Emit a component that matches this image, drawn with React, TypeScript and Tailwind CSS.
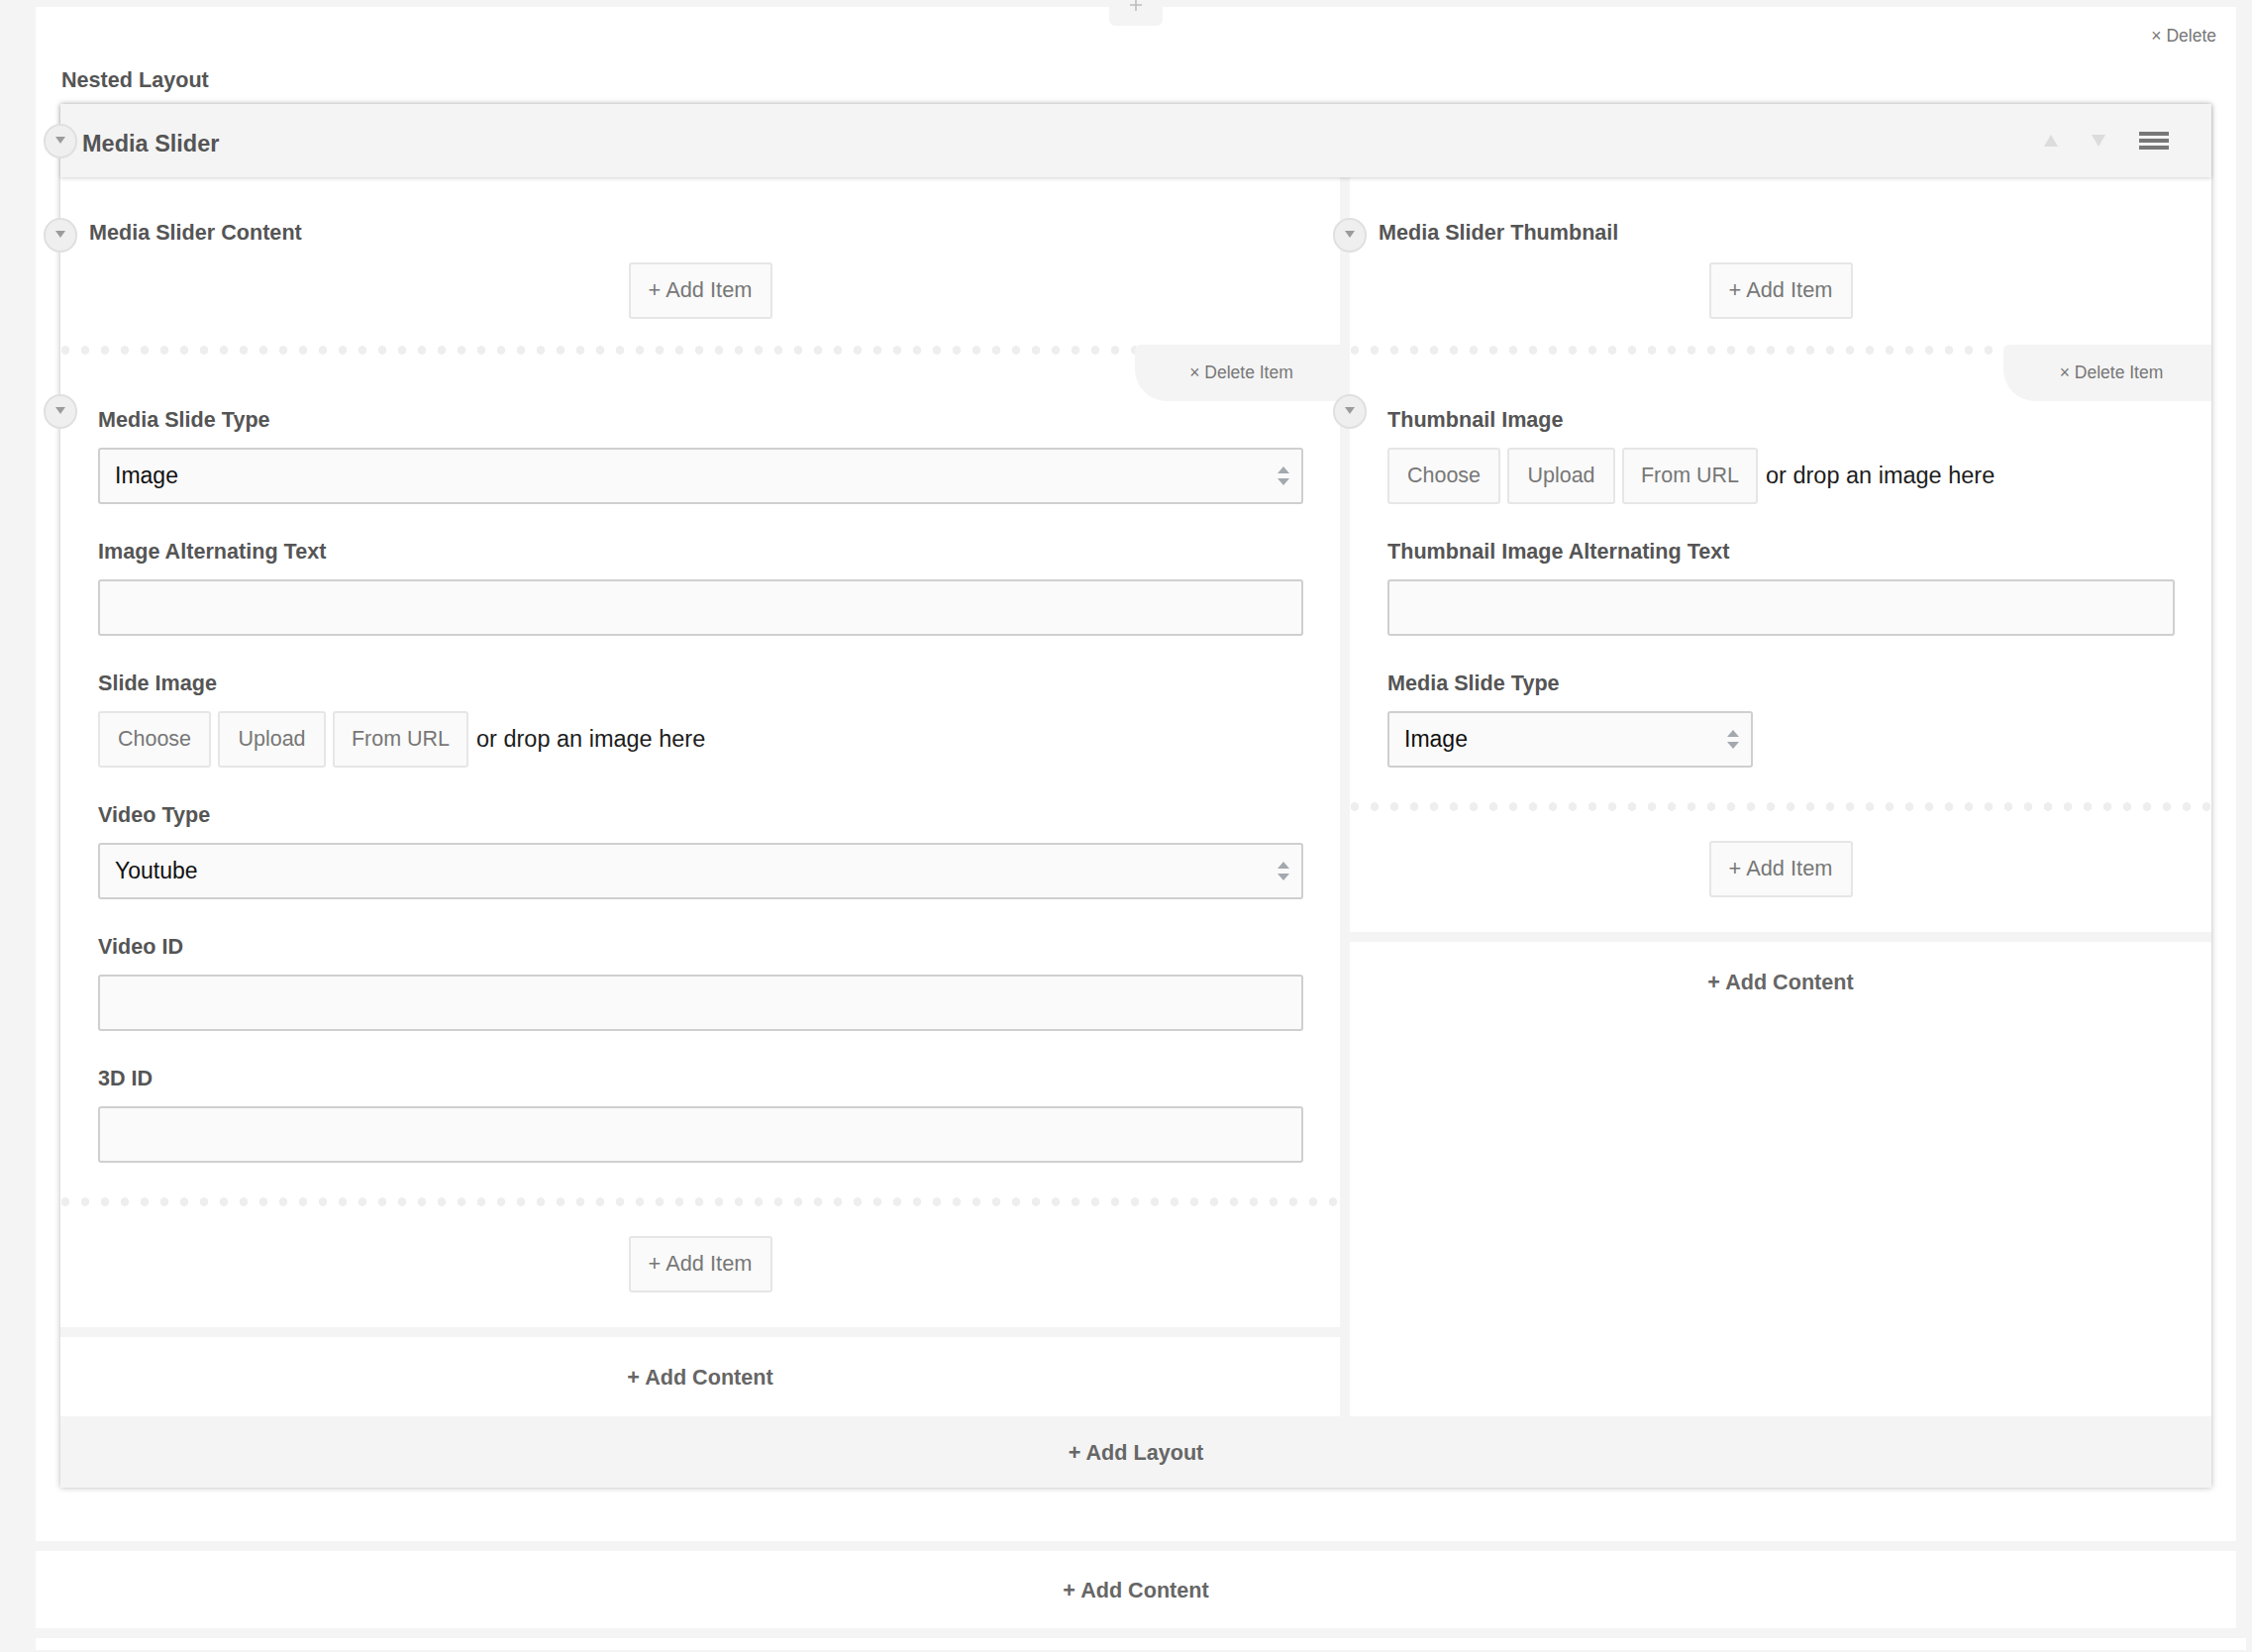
import React from "react";

const font = "font-['Liberation_Sans',Arial,Helvetica,sans-serif]";

function Toggle({ pos }: { pos: string }) {
  return (
    <span
      className={`absolute z-10 flex h-[35px] w-[34px] items-start justify-center rounded-full border-2 border-[#e0e0e0] bg-[#efefef] pt-[11px] ${pos}`}
    >
      <span className="h-0 w-0 border-x-[5px] border-t-[7px] border-x-transparent border-t-[#9b9b9b]" />
    </span>
  );
}

function Dots() {
  return (
    <div className="h-[9px] bg-[radial-gradient(circle,#eeeeee_4px,transparent_4.6px)] bg-[length:20px_9px] bg-[position:-5px_0] bg-repeat-x" />
  );
}

function Label({ children }: { children: React.ReactNode }) {
  return <div className="pt-px text-[21.6px] font-bold leading-6 text-[#555]">{children}</div>;
}

function SelectBox({ value, width }: { value: string; width: string }) {
  return (
    <div
      className={`flex h-[57px] items-center justify-between rounded-[3px] border-2 border-[#cfcfcf] bg-[#fafafa] pl-[15px] pr-[12px] ${width}`}
    >
      <span className="text-[23px] text-[#111]">{value}</span>
      <span className="flex flex-col gap-[5px]">
        <span className="h-0 w-0 border-x-[6.5px] border-b-[7px] border-x-transparent border-b-[#a4a8af]" />
        <span className="h-0 w-0 border-x-[6.5px] border-t-[7px] border-x-transparent border-t-[#a4a8af]" />
      </span>
    </div>
  );
}

function TextBox() {
  return <div className="h-[57px] w-full rounded-[3px] border-2 border-[#cfcfcf] bg-[#fafafa]" />;
}

function ImagePicker() {
  const btn =
    "flex h-[57px] items-center justify-center rounded-[3px] border-2 border-[#e6e6e6] bg-[#fafafa] text-[21.5px] text-[#777]";
  return (
    <div className="flex items-center gap-[7px]">
      <span className={`${btn} w-[114px]`}>Choose</span>
      <span className={`${btn} w-[109px]`}>Upload</span>
      <span className={`${btn} w-[137px]`}>From URL</span>
      <span className="ml-[1px] text-[23.5px] text-[#1d1d1d]">or drop an image here</span>
    </div>
  );
}

function Field({ label, children }: { label: string; children: React.ReactNode }) {
  return (
    <div className="mb-[35px]">
      <Label>{label}</Label>
      <div className="mt-[16px]">{children}</div>
    </div>
  );
}

function AddItem() {
  return (
    <div className="flex justify-center">
      <span className="flex h-[57px] w-[145px] items-center justify-center rounded-[3px] border-2 border-[#e6e6e6] bg-[#fafafa] text-[21.8px] text-[#777]">
        + Add Item
      </span>
    </div>
  );
}

function DeleteTab({ width }: { width: string }) {
  return (
    <span
      className={`absolute right-0 top-[-1px] flex h-[57px] items-center justify-center rounded-bl-[32px] rounded-tl-[6px] bg-[#f4f4f4] pl-[8px] text-[17.5px] text-[#777] ${width}`}
    >
      × Delete Item
    </span>
  );
}

function Column({
  title,
  tabWidth,
  children,
}: {
  title: string;
  tabWidth: string;
  children: React.ReactNode;
}) {
  return (
    <div className="flex flex-col bg-white">
      <div className="relative pl-[29px] pt-[43px]">
        <Toggle pos="left-[-17px] top-[41px]" />
        <Label>{title}</Label>
      </div>
      <div className="mt-[18px]">
        <AddItem />
      </div>
      <div className="relative mt-[27px]">
        <Dots />
        <DeleteTab width={tabWidth} />
        <Toggle pos="left-[-17px] top-[49px]" />
        <div className="pl-[38px] pr-[37px] pt-[53px]">{children}</div>
      </div>
      <Dots />
      <div className="pb-[35px] pt-[30px]">
        <AddItem />
      </div>
      <div className="h-[10px] bg-[#f4f4f4]" />
      <div className="flex h-[80px] items-center justify-center pt-[2px] text-[21.6px] font-bold text-[#666]">
        + Add Content
      </div>
      <div className="flex-1" />
    </div>
  );
}

export default function App() {
  return (
    <div className={`min-h-screen bg-[#f4f4f4] pl-[36px] pr-[16px] pt-[7px] ${font}`}>
      {/* flexible-content block holding the nested layout */}
      <div className="relative bg-white px-[25px] pb-[54px] pt-[61px]">
        <div className="absolute left-1/2 top-[-7px] flex h-[26px] w-[54px] -translate-x-1/2 justify-center rounded-b-[6px] bg-[#f4f4f4]">
          <svg width="14" height="14" viewBox="0 0 14 14" className="mt-[-2px]">
            <path d="M7 1v12M1 7h12" stroke="#bdbdbd" strokeWidth="1.6" />
          </svg>
        </div>
        <span className="absolute right-[20px] top-[19px] text-[17.5px] leading-5 text-[#777]">× Delete</span>

        <div className="pl-px">
          <Label>Nested Layout</Label>
        </div>

        {/* layout box */}
        <div className="mt-[12px] bg-white shadow-[0_0_6px_rgba(0,0,0,0.28)]">
          <div className="relative z-10 flex h-[74px] items-center justify-between bg-[#f4f4f4] pl-[22px] pr-[43px] shadow-[0_1px_4px_rgba(0,0,0,0.18)]">
            <Toggle pos="left-[-17px] top-[20px]" />
            <span className="relative top-[4px] text-[23.5px] font-bold text-[#555]">Media Slider</span>
            <div className="flex items-center gap-[34px]">
              <span className="h-0 w-0 border-x-[7px] border-b-[12px] border-x-transparent border-b-[#dcdcdc]" />
              <span className="h-0 w-0 border-x-[7px] border-t-[12px] border-x-transparent border-t-[#dcdcdc]" />
              <span className="flex w-[30px] flex-col gap-[3.5px]">
                <span className="h-[3.5px] bg-[#777]" />
                <span className="h-[3.5px] bg-[#777]" />
                <span className="h-[3.5px] bg-[#777]" />
              </span>
            </div>
          </div>

          <div className="grid grid-cols-[1292px_1fr] gap-x-[10px] bg-[#f4f4f4]">
            <Column title="Media Slider Content" tabWidth="w-[207px]">
              <Field label="Media Slide Type">
                <SelectBox value="Image" width="w-full" />
              </Field>
              <Field label="Image Alternating Text">
                <TextBox />
              </Field>
              <Field label="Slide Image">
                <ImagePicker />
              </Field>
              <Field label="Video Type">
                <SelectBox value="Youtube" width="w-full" />
              </Field>
              <Field label="Video ID">
                <TextBox />
              </Field>
              <Field label="3D ID">
                <TextBox />
              </Field>
            </Column>

            <Column title="Media Slider Thumbnail" tabWidth="w-[210px]">
              <Field label="Thumbnail Image">
                <ImagePicker />
              </Field>
              <Field label="Thumbnail Image Alternating Text">
                <TextBox />
              </Field>
              <Field label="Media Slide Type">
                <SelectBox value="Image" width="w-[369px]" />
              </Field>
            </Column>
          </div>

          <div className="flex h-[72px] items-center justify-center bg-[#f4f4f4] pt-[2px] text-[21.6px] font-bold text-[#666]">
            + Add Layout
          </div>
        </div>
      </div>

      <div className="mt-[10px] flex h-[78px] items-center justify-center bg-white pt-[2px] text-[21.6px] font-bold text-[#666]">
        + Add Content
      </div>
      <div className="-mr-[10px] mt-[10px] h-[12px] bg-white" />
    </div>
  );
}
